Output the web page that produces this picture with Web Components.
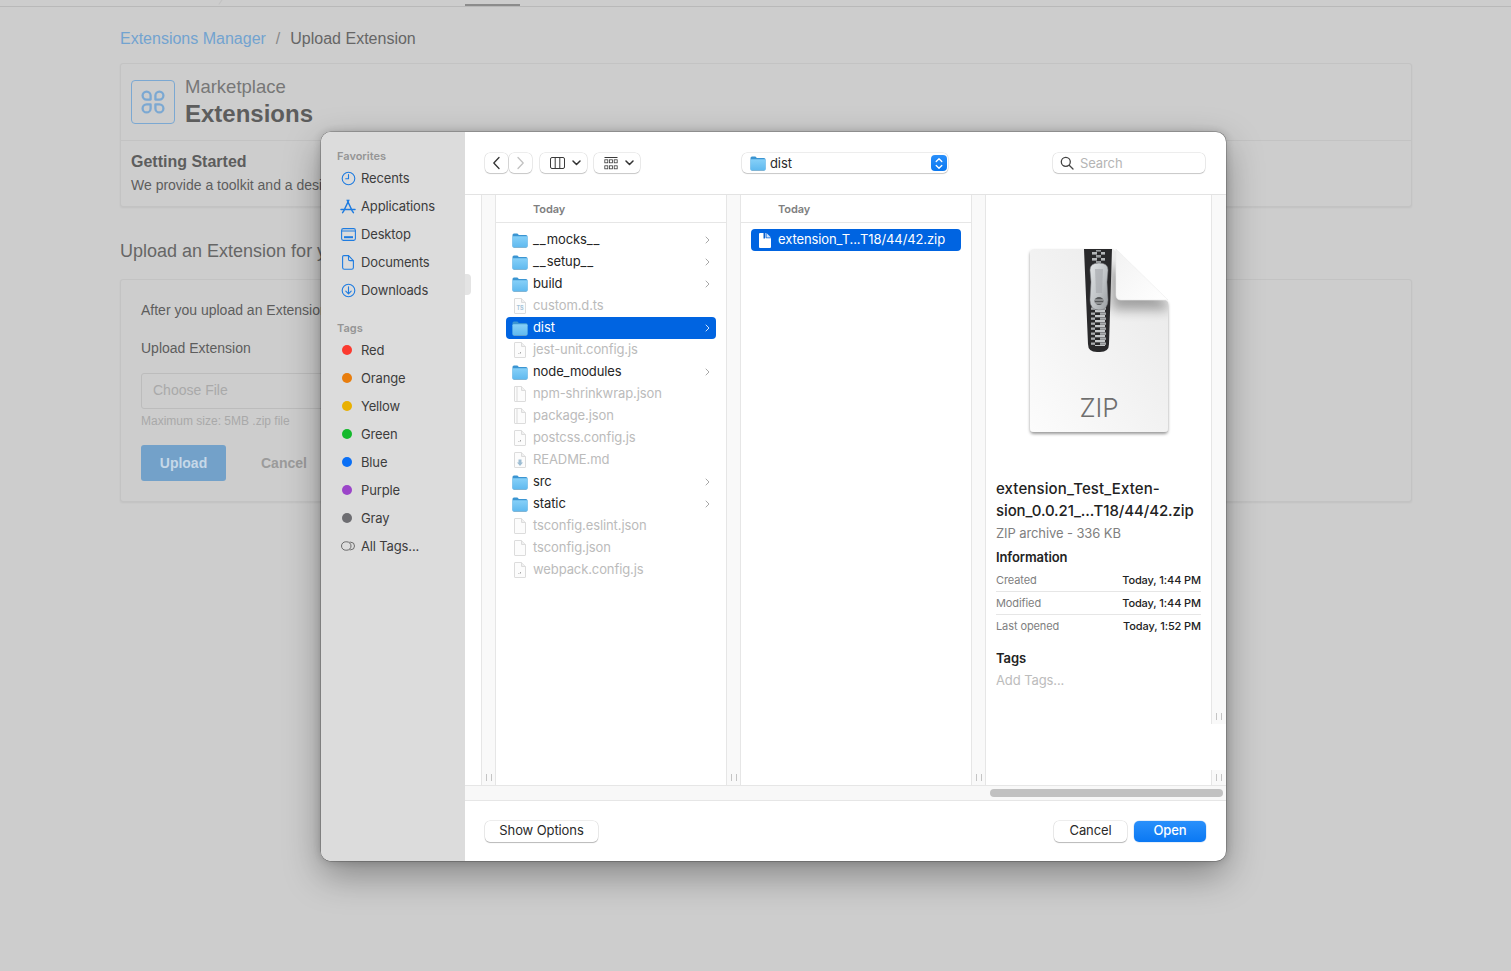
<!doctype html>
<html lang="en">
<head>
<meta charset="utf-8">
<title>Upload Extension</title>
<style>
  html, body { margin: 0; height: 100%; background: #cdcdcd; }
  body { overflow: hidden; font-family: "Liberation Sans", Arial, sans-serif; }
</style>
</head>
<body>
<extension-page></extension-page>
<file-dialog></file-dialog>

<script>
const FOLDER = `<svg width="16" height="15" viewBox="0 0 16 15">
  <defs><linearGradient id="fb" x1="0" y1="0" x2="0" y2="1"><stop offset="0" stop-color="#86d0f8"/><stop offset="1" stop-color="#5fb9ef"/></linearGradient></defs>
  <path d="M.5 2A1.5 1.5 0 0 1 2 .5h3.4l1.5 1.5H14A1.5 1.5 0 0 1 15.500 3.500v9.400A1.600 1.600 0 0 1 13.900 14.500H2.100A1.600 1.600 0 0 1 .5 12.900z" fill="#3b95d2"/>
  <path d="M.5 4.300Q.5 3.300 1.500 3.300H14.500Q15.500 3.300 15.500 4.300V12.900A1.600 1.600 0 0 1 13.900 14.500H2.100A1.600 1.600 0 0 1 .5 12.900z" fill="url(#fb)"/>
  <path d="M2 14.700h12" stroke="#8aa7ba" stroke-width=".6"/>
</svg>`;

const page = (extra) => `<svg width="12" height="16" viewBox="0 0 12 16">
  <path d="M.5 1A.5.500 0 0 1 1 .5h6.500l4 4V15a.5.500 0 0 1-.5.500H1a.5.500 0 0 1-.5-.500z" fill="#fcfcfc" stroke="#dcdcdc"/>
  <path d="M7.500.5v4h4" fill="#f0f0f0" stroke="#dcdcdc"/>${extra}</svg>`;

const ICONS = {
  folder: FOLDER,
  plain: page(''),
  json: page('<path d="M3 1v14" stroke="#e6e6e6" stroke-width="1.500"/>'),
  js: page('<path d="M4.500 11.500h.8M6.500 10v1.500" stroke="#a8a8a8"/>'),
  ts: page('<text x="6" y="12" text-anchor="middle" font-family="Inter, sans-serif" font-size="5.500" font-weight="700" fill="#a5c3d8">TS</text>'),
  md: page('<path d="M4.500 7.500h3v3h1.500L6 14 3 10.500h1.500z" fill="#9dbdd3"/>'),
  zip: `<svg width="12" height="15" viewBox="0 0 12 15"><path d="M1 0h5.600v4.500c0 .5.300.8.800.8H12V14a1 1 0 0 1-1 1H1a1 1 0 0 1-1-1V1a1 1 0 0 1 1-1z" fill="#fff"/><path d="M7.500 0 12 4.400H7.500z" fill="#fff" opacity=".8"/><path d="M4.500 0h1.600v5.500H4.500z" fill="#0a5fc9"/></svg>`,
  recents: `<svg width="15" height="15" viewBox="0 0 15 15" fill="none" stroke="#1f7ce0" stroke-width="1.100" stroke-linecap="round"><circle cx="7.500" cy="7.500" r="6.300"/><path d="M7.500 3.500v4.200H4.700"/></svg>`,
  apps: `<svg width="16" height="15" viewBox="0 0 16 15" fill="none" stroke="#1f7ce0" stroke-width="1.500" stroke-linecap="round"><path d="M8.800 1.200 4.200 11M7.200 1.200 11.800 11M1 10.500h14"/><path d="M2.600 13.600 4 11.600M13.400 13.600 12 11.600"/></svg>`,
  desktop: `<svg width="15" height="13" viewBox="0 0 15 13"><rect x=".6" y=".6" width="13.800" height="11.800" rx="1.800" fill="none" stroke="#1f7ce0" stroke-width="1.100"/><path d="M.6 3h13.800" stroke="#1f7ce0"/><rect x="3" y="8.200" width="9" height="2" fill="#1f7ce0"/></svg>`,
  docs: `<svg width="12" height="15" viewBox="0 0 12 15" fill="none" stroke="#1f7ce0" stroke-width="1.100"><path d="M1.800.6h4.700l4.900 5v6.900a1.800 1.800 0 0 1-1.800 1.800H2.400A1.800 1.800 0 0 1 .6 12.500V1.800A1.200 1.200 0 0 1 1.800.6z"/><path d="M6.500.6v3.600c0 .8.500 1.400 1.400 1.400h3.500"/></svg>`,
  downloads: `<svg width="15" height="15" viewBox="0 0 15 15" fill="none" stroke="#1f7ce0" stroke-width="1.100" stroke-linecap="round" stroke-linejoin="round"><circle cx="7.500" cy="7.500" r="6.300"/><path d="M7.500 3.800v7M4.800 8.200l2.700 2.700 2.700-2.700"/></svg>`,
  alltags: `<svg width="14" height="10" viewBox="0 0 14 10" fill="none" stroke="#5e5e5e" stroke-width=".9"><rect x=".5" y=".8" width="9.500" height="8.400" rx="4.200"/><path d="M8.500 1.200h1.200a3.800 3.800 0 0 1 0 7.600H8.500" /></svg>`,
  chevron: `<svg width="5" height="8" viewBox="0 0 5 8" fill="none" stroke="currentColor" stroke-width="1" stroke-linecap="round" stroke-linejoin="round"><path d="M1 1l3 3-3 3"/></svg>`,
  back: `<svg width="9" height="14" viewBox="0 0 9 14" fill="none" stroke="#333" stroke-width="1.300" stroke-linecap="round" stroke-linejoin="round"><path d="M7 1.500 1.800 7 7 12.500"/></svg>`,
  forward: `<svg width="9" height="14" viewBox="0 0 9 14" fill="none" stroke="#c2c2c2" stroke-width="1.300" stroke-linecap="round" stroke-linejoin="round"><path d="M2 1.500 7.200 7 2 12.500"/></svg>`,
  columns: `<svg width="15" height="12" viewBox="0 0 15 12" fill="none" stroke="#3a3a3a" stroke-width="1"><rect x=".5" y=".5" width="14" height="11" rx="1.500"/><path d="M5.200.5v11M9.800.5v11"/></svg>`,
  grid: `<svg width="14" height="13" viewBox="0 0 14 13" fill="none" stroke="#3a3a3a" stroke-width=".8"><path d="M.5.500h13" stroke-width="1"/><rect x=".8" y="2.800" width="3" height="3"/><rect x="5.500" y="2.800" width="3" height="3"/><rect x="10.200" y="2.800" width="3" height="3"/><rect x=".8" y="8.800" width="3" height="3"/><rect x="5.500" y="8.800" width="3" height="3"/><rect x="10.200" y="8.800" width="3" height="3"/></svg>`,
  caret: `<svg width="9" height="6" viewBox="0 0 9 6" fill="none" stroke="#333" stroke-width="1.500" stroke-linecap="round" stroke-linejoin="round"><path d="M1 1l3.500 3.500L8 1"/></svg>`,
  search: `<svg width="14" height="14" viewBox="0 0 14 14" fill="none" stroke="#444" stroke-width="1.300" stroke-linecap="round"><circle cx="5.800" cy="5.800" r="4.500"/><path d="M9.200 9.200l3.800 3.800"/></svg>`,
  stepper: `<svg width="8" height="13" viewBox="0 0 8 13" fill="none" stroke="#fff" stroke-width="1.300" stroke-linecap="round" stroke-linejoin="round"><path d="M1.200 4.500 4 1.700l2.800 2.800M1.200 8.500 4 11.300l2.800-2.800"/></svg>`,
  clover: `<svg width="26" height="26" viewBox="0 0 26 26" fill="none" stroke="#7ba8d2" stroke-width="2.300" stroke-linejoin="round"><path d="M10.600 10.600H6.600a4 4 0 1 1 4-4zM15.400 10.600h4a4 4 0 1 0-4-4zM10.600 15.400H6.600a4 4 0 1 0 4 4zM15.400 15.400h4a4 4 0 1 1-4 4z"/></svg>`,
};

class MacIcon extends HTMLElement {
  static get observedAttributes() {
    return ['name'];
  }

  constructor() {
    super();
    this.attachShadow({ mode: 'open' });
  }

  attributeChangedCallback(_name, _oldValue, newValue) {
    this.shadowRoot.innerHTML = `
      <style>:host { display: inline-flex; line-height: 0; align-items: center; justify-content: center; }</style>
      ${ICONS[newValue] || ''}`;
  }
}

class ExtensionPage extends HTMLElement {
  constructor() {
    super();
    this.attachShadow({ mode: 'open' }).innerHTML = `
      <style>
        :host { display: block; height: 971px; color: #5d5d5d; font-family: "Liberation Sans", Arial, sans-serif; }
        .nav { height: 6px; border-bottom: 1px solid #b9b9b9; position: relative; }
        .nav i { position: absolute; left: 465px; top: 4px; width: 55px; height: 2px; background: #8c8c8c; }
        .nav u { position: absolute; left: 220px; top: -1px; width: 1px; height: 6px; background: #c2c2c2; transform: rotate(35deg); }
        main { width: 1292px; margin-left: 120px; }
        .crumbs { display: flex; gap: 10px; height: 56px; padding-top: 8px; align-items: center; font-size: 16px; color: #666; box-sizing: border-box; }
        .crumbs a { color: #72a3d0; }
        .crumbs s { text-decoration: none; color: #888; }
        .card { background: #cdcdcd; border: 1px solid #c3c3c3; border-radius: 3px; box-shadow: 0 1px 2px rgba(0,0,0,.06); }
        .head { display: flex; gap: 10px; height: 77px; padding: 16px 10px 0; box-sizing: border-box; border-bottom: 1px solid #c3c3c3; }
        .logo { width: 44px; height: 44px; box-sizing: border-box; border: 1px solid #7ba8d2; border-radius: 4px; display: flex; align-items: center; justify-content: center; }
        .titles { display: flex; flex-direction: column; }
        .titles span { font-size: 18.500px; line-height: 22px; color: #777; margin-top: -4px; }
        .titles b { font-size: 24px; line-height: 30px; margin-top: 1px; color: #5d5d5d; }
        .intro { padding: 10px 10px 0; height: 65px; box-sizing: border-box; }
        .intro b { display: block; font-size: 16px; line-height: 22px; }
        .intro p { margin: 1px 0 0; font-size: 14px; line-height: 22px; }
        h2 { margin: 0; font-size: 18px; font-weight: 400; height: 72px; line-height: 88px; box-sizing: border-box; color: #666; }
        .upload { height: 223px; box-sizing: border-box; padding: 20px; margin-top: 0; font-size: 14px; }
        .upload p { margin: 0; line-height: 20px; }
        .label { margin-top: 18px !important; }
        .file { margin-top: 15px; width: 700px; height: 36px; box-sizing: border-box; border: 1px solid #bcbcbc; border-radius: 3px; padding: 0 11px; line-height: 32px; color: #a9a9a9; }
        small { display: block; font-size: 12px; line-height: 16px; margin-top: 4px; color: #a9a9a9; }
        .actions { display: flex; margin-top: 16px; align-items: center; }
        .actions b { width: 85px; height: 36px; line-height: 36px; background: #73a1c9; color: #c6d8e8; text-align: center; border-radius: 3px; }
        .actions em { font-style: normal; font-weight: 700; margin-left: 35px; color: #9b9b9b; }
      </style>
      <div class="nav"><u></u><i></i></div>
      <main>
        <div class="crumbs"><a>Extensions Manager</a><s>/</s><span>Upload Extension</span></div>
        <section class="card">
          <div class="head">
            <div class="logo"><mac-icon name="clover"></mac-icon></div>
            <div class="titles"><span>Marketplace</span><b>Extensions</b></div>
          </div>
          <div class="intro">
            <b>Getting Started</b>
            <p>We provide a toolkit and a desi</p>
          </div>
        </section>
        <h2>Upload an Extension for y</h2>
        <section class="card upload">
          <p>After you upload an Extension</p>
          <p class="label">Upload Extension</p>
          <div class="file">Choose File</div>
          <small>Maximum size: 5MB .zip file</small>
          <div class="actions"><b>Upload</b><em>Cancel</em></div>
        </section>
      </main>`;
  }
}

class SidebarItem extends HTMLElement {
  constructor() {
    super();
    this.attachShadow({ mode: 'open' }).innerHTML = `
      <style>
        :host { display: flex; align-items: center; height: 28px; color: #3d3d3d; }
        .lead { width: 18px; margin-left: 18px; margin-right: 4px; display: flex; justify-content: center; }
        .dot { width: 10px; height: 10px; border-radius: 50%; margin-left: -2px; }
      </style>
      <span class="lead"></span><slot></slot>`;
  }

  connectedCallback() {
    const lead = this.shadowRoot.querySelector('.lead');
    if (lead.hasChildNodes()) {
      return;
    }
    const color = this.getAttribute('color');
    lead.innerHTML = color
      ? `<span class="dot" style="background:${color}"></span>`
      : `<mac-icon name="${this.getAttribute('icon')}"></mac-icon>`;
  }
}

class DialogSidebar extends HTMLElement {
  constructor() {
    super();
    this.attachShadow({ mode: 'open' }).innerHTML = `
      <style>
        :host { display: block; width: 144px; flex: none; background: #dcdcdc; box-sizing: border-box; padding-top: 15px; font-size: 13px; letter-spacing: -.15px; }
        h4 { margin: 0 0 0 16px; height: 17px; line-height: 19px; font-size: 11px; font-weight: 600; color: #959595; letter-spacing: 0; }
        .gap { margin-top: 15px; }
      </style>
      <h4>Favorites</h4>
      <div>
        <sidebar-item icon="recents">Recents</sidebar-item>
        <sidebar-item icon="apps">Applications</sidebar-item>
        <sidebar-item icon="desktop">Desktop</sidebar-item>
        <sidebar-item icon="docs">Documents</sidebar-item>
        <sidebar-item icon="downloads">Downloads</sidebar-item>
      </div>
      <h4 class="gap">Tags</h4>
      <div>
        <sidebar-item color="#fb3a2f">Red</sidebar-item>
        <sidebar-item color="#e87d0d">Orange</sidebar-item>
        <sidebar-item color="#e9b000">Yellow</sidebar-item>
        <sidebar-item color="#14b92c">Green</sidebar-item>
        <sidebar-item color="#0a6ff5">Blue</sidebar-item>
        <sidebar-item color="#9b45c9">Purple</sidebar-item>
        <sidebar-item color="#6d6d71">Gray</sidebar-item>
        <sidebar-item icon="alltags">All Tags...</sidebar-item>
      </div>`;
  }
}

class ToolButton extends HTMLElement {
  constructor() {
    super();
    this.attachShadow({ mode: 'open' }).innerHTML = `
      <style>
        :host { display: inline-flex; align-items: center; justify-content: center; gap: 7px; height: 20px; box-sizing: border-box; background: #fff; border-radius: 5px; box-shadow: 0 0 0 .5px rgba(0,0,0,.14), 0 1px 1px rgba(0,0,0,.16); font-size: 13px; color: #2a2a2a; }
      </style>
      <slot></slot>`;
  }
}

class DialogToolbar extends HTMLElement {
  constructor() {
    super();
    this.attachShadow({ mode: 'open' }).innerHTML = `
      <style>
        :host { display: grid; grid-template-columns: 1fr auto 1fr; align-items: center; height: 62px; flex: none; padding: 0 21px 0 20px; border-bottom: 1px solid #e3e3e3; }
        .left { display: flex; }
        .nav { display: flex; gap: 1px; margin-right: 8px; }
        .nav tool-button { width: 23px; }
        .view { width: 47px; margin-right: 7px; justify-content: flex-start; padding-left: 10px; }
        .view + .view { width: 46px; }
        .path { width: 206px; justify-content: flex-start; padding: 0 1px 0 8px; gap: 4px; }
        .path span { flex: 1; }
        .step { width: 16px; height: 16px; background: linear-gradient(#2a90fb, #0a78f0); border-radius: 4px; display: flex; align-items: center; justify-content: center; }
        .search { justify-self: end; width: 152px; justify-content: flex-start; padding-left: 7px; gap: 6px; color: #b5b5b5; }
      </style>
      <div class="left">
        <div class="nav">
          <tool-button><mac-icon name="back"></mac-icon></tool-button>
          <tool-button><mac-icon name="forward"></mac-icon></tool-button>
        </div>
        <tool-button class="view"><mac-icon name="columns"></mac-icon><mac-icon name="caret"></mac-icon></tool-button>
        <tool-button class="view"><mac-icon name="grid"></mac-icon><mac-icon name="caret"></mac-icon></tool-button>
      </div>
      <tool-button class="path"><mac-icon name="folder"></mac-icon><span>dist</span><i class="step"><mac-icon name="stepper"></mac-icon></i></tool-button>
      <tool-button class="search"><mac-icon name="search"></mac-icon>Search</tool-button>`;
  }
}

class FinderGutter extends HTMLElement {
  constructor() {
    super();
    this.attachShadow({ mode: 'open' }).innerHTML = `
      <style>
        :host { display: flex; flex-direction: column; flex: none; width: 15px; box-sizing: border-box; }
        .seg { flex: 1; display: flex; align-items: flex-end; justify-content: center; background: #f9f9f9; border: solid #e6e6e6; border-width: 0 1px; padding-bottom: 4px; box-sizing: border-box; }
        :host([split]) .seg { border-width: 0 0 0 1px; }
        .hole { display: none; height: 46px; background: #fff; }
        :host([split]) .hole { display: block; }
        :host([split]) .low { display: flex; flex: none; height: 15px; }
        .low { display: none; }
        .grip { width: 4px; height: 7px; border: solid #c4c4c4; border-width: 0 1px; }
      </style>
      <div class="seg"><span class="grip"></span></div>
      <div class="hole"></div>
      <div class="seg low"><span class="grip"></span></div>`;
  }
}

class FinderRow extends HTMLElement {
  constructor() {
    super();
    this.attachShadow({ mode: 'open' }).innerHTML = `
      <style>
        :host { display: flex; align-items: center; height: 22px; margin: 0 10px; padding: 0 6px; border-radius: 4px; font-size: 13px; color: #bbb; }
        :host([folder]) { color: #252525; }
        :host([selected]) { background: #0064e1; color: #fff; }
        .icon { width: 16px; margin-right: 5px; display: flex; justify-content: center; }
        .name { flex: 1; white-space: nowrap; padding-bottom: 2px; }
        .more { color: #a8a8a8; display: flex; }
        :host([selected]) .more { color: #cfe2fb; }
      </style>
      <span class="icon"><mac-icon></mac-icon></span>
      <span class="name"><slot></slot></span>
      <span class="more"></span>`;
  }

  connectedCallback() {
    const kind = this.hasAttribute('folder') ? 'folder' : this.getAttribute('kind') || 'plain';
    this.shadowRoot.querySelector('mac-icon').setAttribute('name', kind);
    if (this.hasAttribute('folder')) {
      this.shadowRoot.querySelector('.more').innerHTML = '<mac-icon name="chevron"></mac-icon>';
    }
  }
}

class FinderColumn extends HTMLElement {
  constructor() {
    super();
    this.attachShadow({ mode: 'open' }).innerHTML = `
      <style>
        :host { display: block; width: 230px; flex: none; background: #fff; box-sizing: border-box; }
        header { height: 28px; box-sizing: border-box; border-bottom: 1px solid #e6e6e6; padding-left: 37px; font-size: 11px; font-weight: 600; line-height: 28px; color: #808080; }
        .list { padding-top: 6px; }
      </style>
      <header>Today</header>
      <div class="list"><slot></slot></div>`;
  }
}

class ZipArt extends HTMLElement {
  constructor() {
    super();
    this.attachShadow({ mode: 'open' }).innerHTML = `
      <style>:host { display: block; height: 205px; line-height: 0; }</style>
      <svg width="160" height="205" viewBox="0 0 160 205">
        <defs>
          <linearGradient id="paper" x1="1" y1="0" x2="0" y2="1"><stop offset="0" stop-color="#e8e8e8"/><stop offset="1" stop-color="#fcfcfc"/></linearGradient>
          <linearGradient id="fold" x1="0" y1="0" x2="1" y2="1"><stop offset="0" stop-color="#f2f2f2"/><stop offset="1" stop-color="#fff"/></linearGradient>
          <linearGradient id="metal" x1="0" y1="0" x2="1" y2="1"><stop offset="0" stop-color="#e2e5e7"/><stop offset=".6" stop-color="#bcc0c3"/><stop offset="1" stop-color="#989c9f"/></linearGradient>
          <pattern id="teeth" width="15" height="5" patternUnits="userSpaceOnUse"><rect width="10" height="2.300" fill="#c4c7c9"/><rect x="5" y="2.500" width="10" height="2.300" fill="#a9acae"/></pattern>
          <pattern id="top" width="9" height="6" patternUnits="userSpaceOnUse"><rect width="5" height="2.600" fill="#b4b7b9"/><rect x="4" y="3" width="5" height="2.600" fill="#989b9d"/></pattern>
          <filter id="lift" x="-10%" y="-10%" width="120%" height="120%"><feDropShadow dx="0" dy="2" stdDeviation="1.500" flood-color="#000" flood-opacity=".4"/></filter>
          <filter id="soft" x="-30%" y="-30%" width="160%" height="160%"><feGaussianBlur stdDeviation="6"/></filter>
          <clipPath id="sheet"><path d="M14 9H93L148 62V188a4 4 0 0 1-4 4H14a4 4 0 0 1-4-4V13a4 4 0 0 1 4-4z"/></clipPath>
        </defs>
        <path d="M14 9H93L148 62V188a4 4 0 0 1-4 4H14a4 4 0 0 1-4-4V13a4 4 0 0 1 4-4z" fill="url(#paper)" filter="url(#lift)"/>
        <g clip-path="url(#sheet)">
          <path d="M90 24 148 62V70H92z" fill="#000" opacity=".32" filter="url(#soft)"/>
        </g>
        <path d="M64 9H92L89 104Q89 112 80 112H77Q68 112 68 104z" fill="#29292b"/>
        <rect x="71" y="66" width="15" height="40" fill="url(#teeth)"/>
        <rect x="72" y="10" width="13" height="13" fill="url(#top)"/>
        <path d="M70 30Q70 23 79 23 88 23 88 30L87 42 88 60Q88 70 79 70 70 70 70 60L71 42z" fill="url(#metal)" stroke="#7a7d80" stroke-width=".5"/>
        <path d="M75 29h8l-1 24h-6z" fill="#a9adb0" opacity=".7"/>
        <ellipse cx="79" cy="61" rx="4.500" ry="4" fill="#56585a"/>
        <path d="M75 60h8M75 63h8" stroke="#c2c5c7" stroke-width="1"/>
        <path d="M96 9 148 60H101Q96 60 96 55z" fill="url(#fold)" stroke="#ececec" stroke-width=".6"/>
        <text x="79" y="177" text-anchor="middle" font-family="Inter, sans-serif" font-size="26" font-weight="300" fill="#6f6f6f">ZIP</text>
      </svg>`;
  }
}

class PreviewPane extends HTMLElement {
  constructor() {
    super();
    this.attachShadow({ mode: 'open' }).innerHTML = `
      <style>
        :host { display: block; width: 225px; flex: none; box-sizing: border-box; padding: 45px 10px 0; background: #fff; color: #222; }
        zip-art { margin-left: 24px; }
        .name { margin-top: 33px; font-size: 15px; line-height: 22px; font-weight: 500; }
        .name span { letter-spacing: .12px; }
        .kind { font-size: 13px; line-height: 22px; color: #808080; }
        h5 { margin: 2px 0 1px; font-size: 13px; font-weight: 600; line-height: 22px; color: #222; }
        .meta { display: flex; justify-content: space-between; height: 23px; box-sizing: border-box; line-height: 22px; font-size: 11px; border-bottom: 1px solid #e6e6e6; font-weight: 500; }
        .meta span { color: #808080; font-weight: 400; }
        .meta.last { border: 0; }
        .tags { margin-top: 9px; margin-bottom: 0; }
        .add { font-size: 13px; line-height: 22px; color: #bcbcbc; }
      </style>
      <zip-art></zip-art>
      <div class="name"><span>extension_Test_Exten-</span><br>sion_0.0.21_...T18/44/42.zip</div>
      <div class="kind">ZIP archive - 336 KB</div>
      <h5>Information</h5>
      <div class="meta"><span>Created</span>Today, 1:44 PM</div>
      <div class="meta"><span>Modified</span>Today, 1:44 PM</div>
      <div class="meta last"><span>Last opened</span>Today, 1:52 PM</div>
      <h5 class="tags">Tags</h5>
      <div class="add">Add Tags...</div>`;
  }
}

class SheetButton extends HTMLElement {
  constructor() {
    super();
    this.attachShadow({ mode: 'open' }).innerHTML = `
      <style>
        :host { display: inline-flex; align-items: center; justify-content: center; height: 21px; padding-bottom: 2px; box-sizing: border-box; border-radius: 5px; background: #fff; color: #2a2a2a; font-size: 13px; box-shadow: 0 0 0 .5px rgba(0,0,0,.14), 0 1px 1px rgba(0,0,0,.22); }
        :host([primary]) { background: linear-gradient(#2a90fb, #0a78f3); color: #fff; font-weight: 500; box-shadow: 0 0 0 .5px rgba(0,90,200,.2); }
      </style>
      <slot></slot>`;
  }
}

class FileDialog extends HTMLElement {
  constructor() {
    super();
    this.attachShadow({ mode: 'open' }).innerHTML = `
      <style>
        :host { position: absolute; left: 321px; top: 132px; width: 905px; height: 729px; display: flex; border-radius: 10px; overflow: hidden; background: #fff; font-family: Inter, "Noto Sans", sans-serif; letter-spacing: -.1px; box-shadow: 0 0 0 .5px rgba(0,0,0,.35), 0 0 8px rgba(0,0,0,.2), 0 14px 36px rgba(0,0,0,.35); }
        .handle { position: absolute; left: 144px; top: 142px; width: 6px; height: 21px; background: #e4e4e4; border-radius: 0 4px 4px 0; }
        .main { flex: 1; min-width: 0; display: flex; flex-direction: column; }
        .strip { display: flex; flex: 1; min-height: 0; background: #fff; }
        .sliver { width: 16px; flex: none; }
        .scroll { height: 16px; flex: none; display: flex; align-items: center; justify-content: flex-end; padding-right: 3px; box-sizing: border-box; background: #f8f8f8; border: solid #e6e6e6; border-width: 1px 0; }
        .scroll i { width: 233px; height: 8px; border-radius: 4px; background: #c1c1c1; }
        .foot { height: 60px; flex: none; display: flex; align-items: center; padding: 0 20px; gap: 7px; }
        .foot .options { width: 113px; margin-right: auto; }
        .foot .cancel { width: 73px; }
        .foot .open { width: 72px; }
        .us { letter-spacing: .9px; }
      </style>
      <dialog-sidebar></dialog-sidebar>
      <span class="handle"></span>
      <div class="main">
        <dialog-toolbar></dialog-toolbar>
        <div class="strip">
          <div class="sliver"></div>
          <finder-gutter></finder-gutter>
          <finder-column>
            <finder-row folder><span class="us">__</span>mocks<span class="us">__</span></finder-row>
            <finder-row folder><span class="us">__</span>setup<span class="us">__</span></finder-row>
            <finder-row folder>build</finder-row>
            <finder-row kind="ts">custom.d.ts</finder-row>
            <finder-row folder selected>dist</finder-row>
            <finder-row kind="js">jest-unit.config.js</finder-row>
            <finder-row folder>node_modules</finder-row>
            <finder-row kind="json">npm-shrinkwrap.json</finder-row>
            <finder-row kind="json">package.json</finder-row>
            <finder-row kind="js">postcss.config.js</finder-row>
            <finder-row kind="md">README.md</finder-row>
            <finder-row folder>src</finder-row>
            <finder-row folder>static</finder-row>
            <finder-row>tsconfig.eslint.json</finder-row>
            <finder-row>tsconfig.json</finder-row>
            <finder-row kind="js">webpack.config.js</finder-row>
          </finder-column>
          <finder-gutter></finder-gutter>
          <finder-column>
            <finder-row kind="zip" selected>extension_T...T18/44/42.zip</finder-row>
          </finder-column>
          <finder-gutter></finder-gutter>
          <preview-pane></preview-pane>
          <finder-gutter split></finder-gutter>
        </div>
        <div class="scroll"><i></i></div>
        <div class="foot">
          <sheet-button class="options">Show Options</sheet-button>
          <sheet-button class="cancel">Cancel</sheet-button>
          <sheet-button class="open" primary>Open</sheet-button>
        </div>
      </div>`;
  }
}

customElements.define('mac-icon', MacIcon);
customElements.define('extension-page', ExtensionPage);
customElements.define('sidebar-item', SidebarItem);
customElements.define('dialog-sidebar', DialogSidebar);
customElements.define('tool-button', ToolButton);
customElements.define('dialog-toolbar', DialogToolbar);
customElements.define('finder-gutter', FinderGutter);
customElements.define('finder-row', FinderRow);
customElements.define('finder-column', FinderColumn);
customElements.define('zip-art', ZipArt);
customElements.define('preview-pane', PreviewPane);
customElements.define('sheet-button', SheetButton);
customElements.define('file-dialog', FileDialog);
</script>
</body>
</html>
